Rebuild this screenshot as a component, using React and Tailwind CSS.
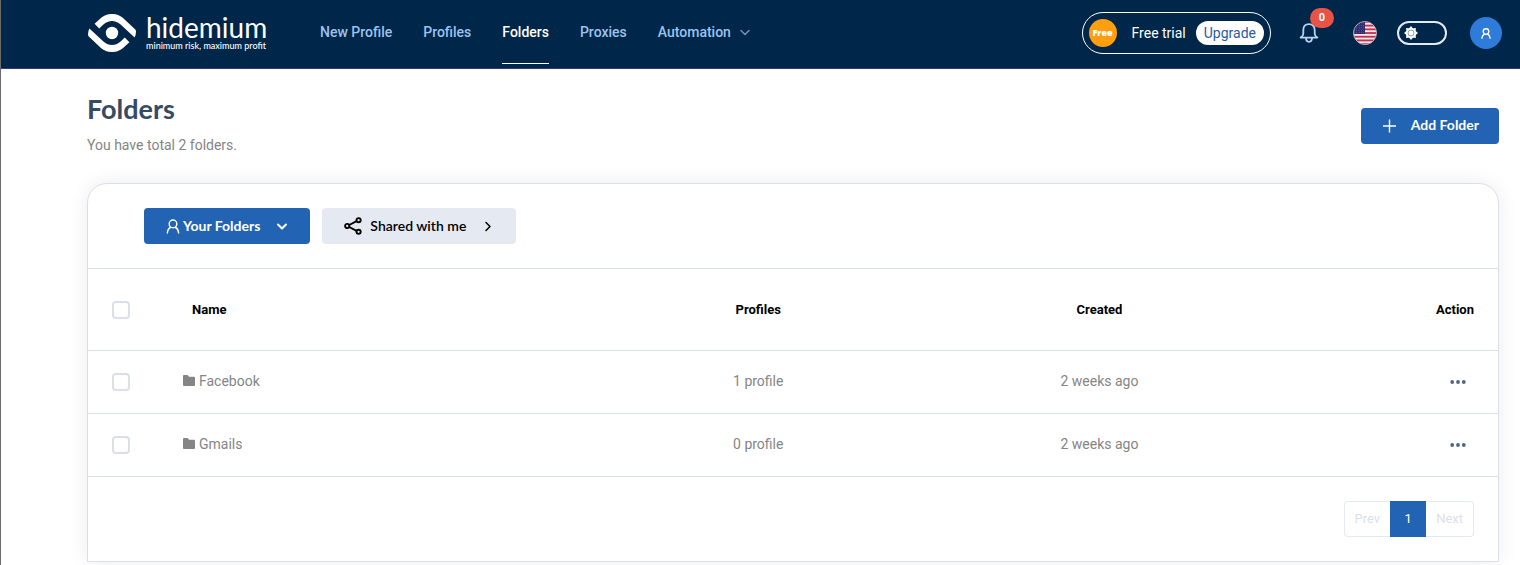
import React from "react";

const folders = [
  { name: "Facebook", profiles: "1 profile", created: "2 weeks ago" },
  { name: "Gmails", profiles: "0 profile", created: "2 weeks ago" },
];

const navItems = ["New Profile", "Profiles", "Folders", "Proxies"];

function LogoMark() {
  const band = "M6.6 9.8 L13.2 3.8 C19.5 -1.3 28.5 -1.3 34.8 3.8 L47 15.2 Q48 16.2 48 17.6 Q48 21 46.6 23.6 L32.6 10.6 C27.4 5.9 20.6 5.9 15.4 10.6 L11.2 14.4 Z";
  return (
    <svg viewBox="0 0 48 38" className="h-[38px] w-12" fill="#fff" aria-hidden="true">
      <path d={band} />
      <path d={band} transform="rotate(180 24 19)" />
      <circle cx="24" cy="19" r="6.2" />
    </svg>
  );
}

function Chevron({ className, direction = "down", width = 2 }) {
  return (
    <svg viewBox="0 0 12 12" className={className} fill="none" stroke="currentColor" strokeWidth={width} strokeLinecap="round" strokeLinejoin="round" aria-hidden="true">
      <path d={direction === "down" ? "M2 4.5 L6 8.5 L10 4.5" : "M4 2.5 L8 6.5 L4 10.5"} />
    </svg>
  );
}

function Bell() {
  return (
    <svg viewBox="0 0 20 20" className="size-5" fill="none" stroke="#b7d3f2" strokeWidth="1.8" strokeLinejoin="round" aria-hidden="true">
      <path d="M1.6 14.6 C3.6 13.4 4.3 12.4 4.3 10.4 V7.2 C4.3 3.6 6.4 1.2 10 1.2 C13.6 1.2 15.7 3.6 15.7 7.2 V10.4 C15.7 12.4 16.4 13.4 18.4 14.6 Z" />
      <path d="M7 14.8 C7 17.4 8.2 18.8 10 18.8 C11.8 18.8 13 17.4 13 14.8" />
    </svg>
  );
}

function Flag() {
  const stripes = [0, 1, 2, 3, 4, 5, 6];
  const stars = [0, 1, 2, 3, 4];
  return (
    <svg viewBox="0 0 24 24" className="size-6" aria-hidden="true">
      <defs>
        <clipPath id="flag-round"><circle cx="12" cy="12" r="11.5" /></clipPath>
      </defs>
      <g clipPath="url(#flag-round)">
        <rect width="24" height="24" fill="#f3e9ee" />
        {stripes.map((i) => <rect key={i} y={i * 3.7} width="24" height="1.85" fill="#c8314d" />)}
        <rect width="12" height="13" fill="#2f2f6e" />
        {stars.map((r) => stars.map((c) => <circle key={`${r}-${c}`} cx={1.5 + c * 2.3} cy={2 + r * 2.4} r="0.35" fill="#a9a9cf" />))}
      </g>
      <circle cx="12" cy="12" r="11.5" fill="none" stroke="#b9b4c6" strokeWidth="0.8" />
    </svg>
  );
}

function Sun() {
  const rays = [0, 45, 90, 135, 180, 225, 270, 315];
  return (
    <svg viewBox="0 0 14 14" className="pointer-events-none absolute left-[7px] top-[5px] size-3.5" aria-hidden="true">
      {rays.map((a) => <path key={a} d="M4.6 3 L7 0 L9.4 3 Z" fill="#fff" transform={`rotate(${a} 7 7)`} />)}
      <circle cx="7" cy="7" r="4.8" fill="#fff" />
      <circle cx="7" cy="7" r="3" fill="none" stroke="#5f7a95" strokeWidth="0.7" />
    </svg>
  );
}

function Person({ className, width = 1.5 }) {
  return (
    <svg viewBox="0 0 14 16" className={className} fill="none" stroke="currentColor" strokeWidth={width} strokeLinecap="round" aria-hidden="true">
      <circle cx="7" cy="5.2" r="4.1" />
      <path d="M1 15 C1.2 11.8 2.6 9.8 4.6 8.8 M13 15 C12.8 11.8 11.4 9.8 9.4 8.8" />
    </svg>
  );
}

function ShareIcon() {
  return (
    <svg viewBox="0 0 18 18" className="size-[18px]" fill="none" stroke="#000" strokeWidth="1.9" aria-hidden="true">
      <circle cx="3.2" cy="9" r="2.1" />
      <circle cx="14.6" cy="3.2" r="2.1" />
      <circle cx="14.6" cy="14.8" r="2.1" />
      <path d="M5.2 8 L12.6 4.2 M5.2 10 L12.6 13.8" />
    </svg>
  );
}

function FolderIcon() {
  return (
    <svg viewBox="0 0 12 11" className="h-[11px] w-3" fill="#858585" aria-hidden="true">
      <path d="M1 0 H4.6 L6 1.7 H11 Q12 1.7 12 2.7 V10 Q12 11 11 11 H1 Q0 11 0 10 V1 Q0 0 1 0 Z" />
    </svg>
  );
}

function Dots() {
  return (
    <svg viewBox="0 0 16 4" className="h-1 w-4" fill="#526484" aria-hidden="true">
      <circle cx="2.2" cy="2" r="1.9" />
      <circle cx="8" cy="2" r="1.9" />
      <circle cx="13.8" cy="2" r="1.9" />
    </svg>
  );
}

function Check({ label }) {
  return (
    <input
      type="checkbox"
      aria-label={label}
      className="block size-[18px] appearance-none rounded border-2 border-[#dbdfea] bg-white checked:bg-[#2263b3]"
    />
  );
}

function Header() {
  return (
    <header className="flex h-[69px] items-center border-b border-[#2c3d8f] bg-[#00264a] pb-0.5 pl-[87px] pr-[18px]">
      <a href="#home" className="flex items-center gap-2.5 text-white" aria-label="hidemium">
        <LogoMark />
        <span className="flex w-[123px] flex-col whitespace-nowrap pb-1 font-['Lato',sans-serif]">
          <span className="text-[28px] leading-7">hidemium</span>
          <span className="text-[9px] font-medium leading-[9px]">minimum risk, maximum profit</span>
        </span>
      </a>
      <nav className="ml-[51px] flex items-center gap-[31px] text-sm font-medium text-[#9dc2ed]">
        {navItems.map((item) => (
          <a
            key={item}
            href={`#${item.toLowerCase().replace(" ", "-")}`}
            className={item === "Folders" ? "flex h-[62px] items-center border-b border-white pb-0.5 text-white" : "flex h-[62px] items-center border-b border-transparent pb-0.5"}
          >
            {item}
          </a>
        ))}
        <button type="button" className="flex h-[62px] items-center gap-2 border-b border-transparent pb-0.5">
          Automation
          <Chevron className="size-3 text-[#6f93bd]" width={1.5} />
        </button>
      </nav>
      <div className="ml-auto flex items-center">
        <div className="flex h-[42px] items-center rounded-full border border-white px-1.5">
          <span className="flex size-7 items-center justify-center rounded-full bg-[#ff9f0f] font-['Open_Sans',sans-serif] text-[9px] font-extrabold text-white">Free</span>
          <span className="ml-[15px] text-sm text-white">Free trial</span>
          <button type="button" className="ml-2.5 h-6 rounded-full bg-white px-2 text-sm leading-6 text-[#2b5ba8]">Upgrade</button>
        </div>
        <button type="button" aria-label="Notifications" className="relative ml-7">
          <Bell />
          <span className="absolute -top-[15px] left-[11px] flex h-5 w-6 items-center justify-center rounded-full bg-[#e85347] text-[11px] font-bold text-white">0</span>
        </button>
        <button type="button" aria-label="Language" className="ml-[34px]"><Flag /></button>
        <label className="relative ml-5 block">
          <input type="checkbox" role="switch" aria-label="Dark mode" className="block h-6 w-[50px] appearance-none rounded-full border-2 border-[#e5e9f2]" />
          <Sun />
        </label>
        <button type="button" aria-label="Account" className="ml-[23px] flex size-8 items-center justify-center rounded-full bg-[#2f7bd9] text-white">
          <Person className="h-[11px] w-2.5" width={1.9} />
        </button>
      </div>
    </header>
  );
}

export default function App() {
  return (
    <div className="min-h-screen border-l border-[#6b6b6b] bg-white font-['Roboto',sans-serif]">
      <Header />
      <main className="pb-[3px] pl-[86px] pr-[21px] pt-6">
        <div className="flex items-center justify-between">
          <div>
            <h1 className="font-['Lato',sans-serif] text-[27px] font-bold leading-8 text-[#364a63]">Folders</h1>
            <p className="mt-2.5 text-sm leading-5 text-[#858585]">You have total 2 folders.</p>
          </div>
          <button type="button" className="mt-1 flex h-9 items-center gap-3.5 rounded bg-[#2263b3] px-5 pb-0.5 font-['Lato',sans-serif] text-sm font-bold text-white">
            <svg viewBox="0 0 16 16" className="size-4" stroke="currentColor" strokeWidth="1.4" aria-hidden="true">
              <path d="M8.5 2.5 V15.5 M2 9 H15" />
            </svg>
            Add Folder
          </button>
        </div>

        <section className="mt-7 rounded-t-[20px] border border-[#dbdfea] bg-white shadow-[0_0_20px_rgba(0,0,0,0.08)]">
          <div className="flex gap-3 border-b border-[#dbdfea] py-6 pl-14">
            <button type="button" className="flex h-9 items-center rounded bg-[#2263b3] px-[22px] font-['Lato',sans-serif] text-sm font-bold text-white">
              <Person className="mr-[3px] h-[15px] w-3.5" />
              Your Folders
              <Chevron className="ml-4 size-3" />
            </button>
            <button type="button" className="flex h-9 items-center rounded bg-[#e5e9f2] px-[22px] font-['Lato',sans-serif] text-sm font-semibold text-black">
              <ShareIcon />
              <span className="ml-2">Shared with me</span>
              <Chevron className="ml-4 size-3" direction="right" width={1.5} />
            </button>
          </div>

          <table className="w-full table-fixed border-collapse text-sm text-[#858585]">
            <colgroup>
              <col className="w-[95px]" />
              <col className="w-[28.7%]" />
              <col className="w-[24.2%]" />
              <col className="w-[24.2%]" />
              <col />
            </colgroup>
            <thead>
              <tr className="h-[81px] border-b border-[#dbdfea] text-[13px] font-bold text-black">
                <th className="pl-6 pt-0.5"><Check label="Select all folders" /></th>
                <th className="pl-[9px] pt-0.5 text-left">Name</th>
                <th className="pt-0.5">Profiles</th>
                <th className="pt-0.5">Created</th>
                <th className="pr-6 pt-0.5 text-right">Action</th>
              </tr>
            </thead>
            <tbody>
              {folders.map((folder) => (
                <tr key={folder.name} className="h-[63px] border-b border-[#dbdfea]">
                  <td className="pl-6"><Check label={`Select ${folder.name}`} /></td>
                  <td className="pb-0.5">
                    <span className="flex items-center gap-1"><FolderIcon />{folder.name}</span>
                  </td>
                  <td className="pb-0.5 text-center">{folder.profiles}</td>
                  <td className="pb-0.5 text-center">{folder.created}</td>
                  <td className="pr-8">
                    <button type="button" aria-label={`Actions for ${folder.name}`} className="ml-auto flex h-5 items-center">
                      <Dots />
                    </button>
                  </td>
                </tr>
              ))}
            </tbody>
          </table>

          <nav aria-label="Pagination" className="flex justify-end p-6 text-[13px]">
            <button type="button" className="h-9 rounded-l border border-r-0 border-[#e5e9f2] px-2.5 text-[#dbdfea]">Prev</button>
            <button type="button" aria-current="page" className="h-9 w-9 bg-[#2263b3] text-white">1</button>
            <button type="button" className="h-9 rounded-r border border-l-0 border-[#e5e9f2] px-2.5 text-[#dbdfea]">Next</button>
          </nav>
        </section>
      </main>
    </div>
  );
}
